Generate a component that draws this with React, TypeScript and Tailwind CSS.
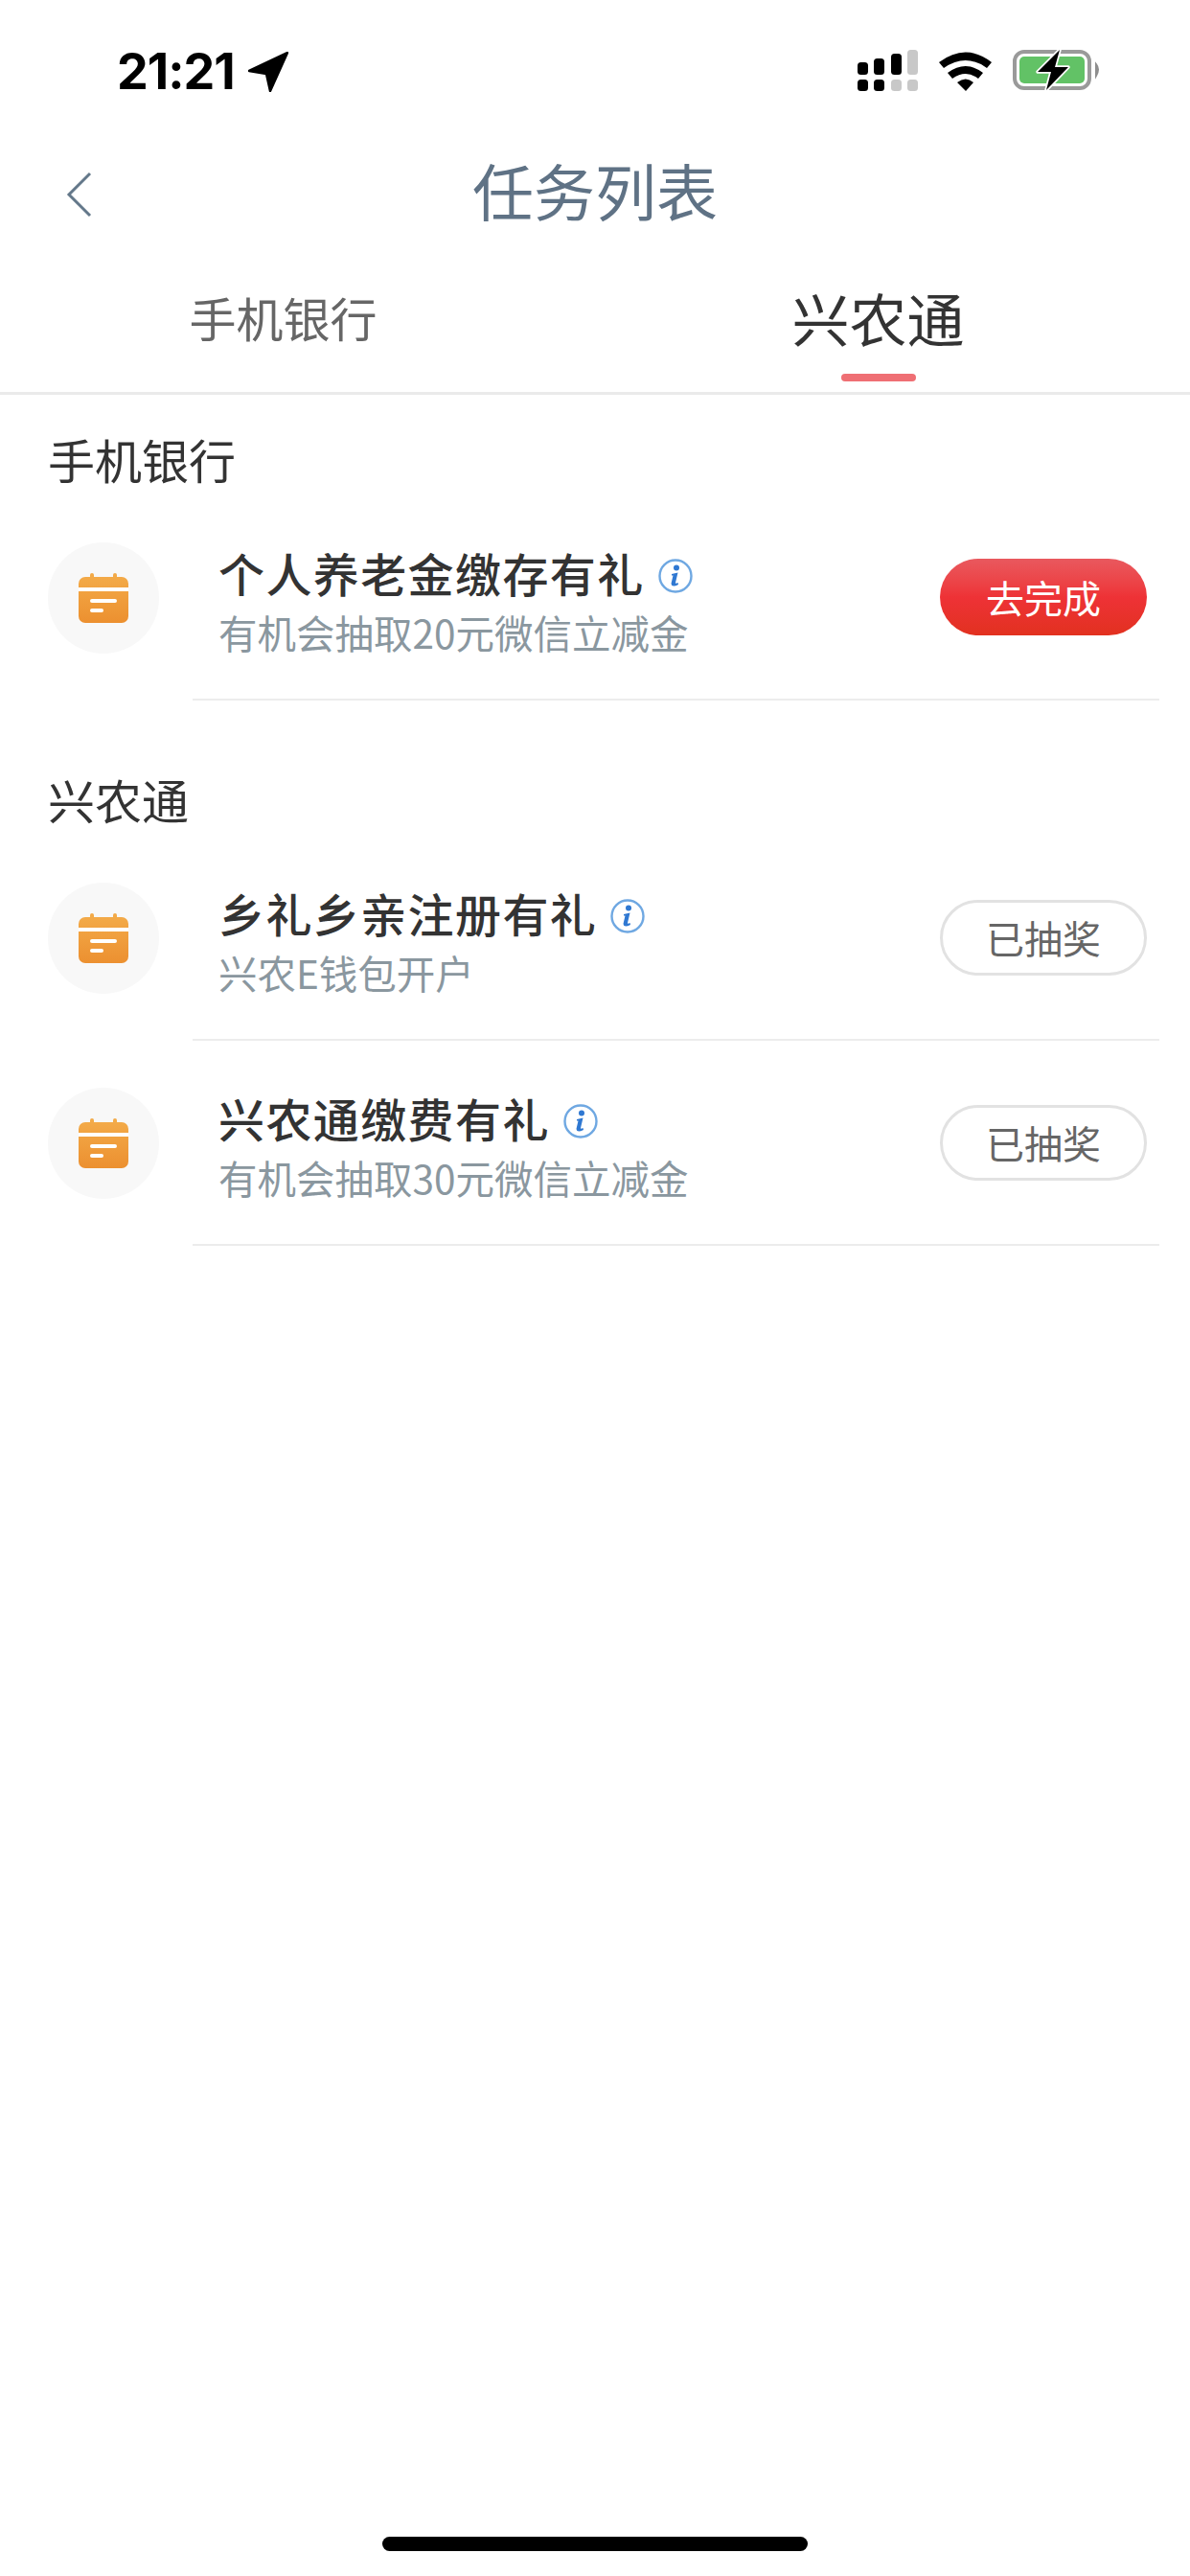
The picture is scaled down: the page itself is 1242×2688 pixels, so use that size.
import type { ReactNode } from "react"

const FONT = "font-['Noto_Sans_CJK_SC','Noto_Sans',sans-serif]"

type Tarea = { titulo: string; sub: string; hecho: boolean }

const GRUPOS: { nombre: string; tareas: Tarea[] }[] = [
  {
    nombre: "手机银行",
    tareas: [{ titulo: "个人养老金缴存有礼", sub: "有机会抽取20元微信立减金", hecho: false }],
  },
  {
    nombre: "兴农通",
    tareas: [
      { titulo: "乡礼乡亲注册有礼", sub: "兴农E钱包开户", hecho: true },
      { titulo: "兴农通缴费有礼", sub: "有机会抽取30元微信立减金", hecho: true },
    ],
  },
]

function StatusIcons() {
  return (
    <svg width="254" height="46" viewBox="0 0 254 46" fill="none">
      <rect x="0" y="15" width="11" height="13" rx="3.5" fill="#000" />
      <rect x="17" y="11" width="11" height="17" rx="3.5" fill="#000" />
      <rect x="35" y="6" width="11" height="22" rx="3.5" fill="#000" />
      <rect x="52" y="2" width="11" height="26" rx="3.5" fill="#c8c8c8" />
      <rect x="0" y="33" width="11" height="12" rx="3.5" fill="#000" />
      <rect x="17" y="33" width="11" height="12" rx="3.5" fill="#000" />
      <rect x="35" y="33" width="11" height="12" rx="3.5" fill="#c8c8c8" />
      <rect x="52" y="33" width="11" height="12" rx="3.5" fill="#c8c8c8" />
      <path d="M85 15 Q113 -6 140 15 L135 21 Q113 5 90 21 Z" fill="#000" />
      <path d="M94 26 Q113 12 131 26 L126 32 Q113 22 99 32 Z" fill="#000" />
      <path d="M104 36 Q113 29 121 36 L113 45 Z" fill="#000" />
      <rect x="164" y="4" width="78" height="38" rx="10" stroke="#9a9a9a" stroke-width="4" />
      <rect x="169" y="9" width="68" height="28" rx="5" fill="#62c266" />
      <path d="M249 17 Q253 22 249 29 Z" fill="#8e8e8e" stroke="#8e8e8e" stroke-width="2" />
      <path
        d="M211 2 L188 25 L202 25 L197 44 L220 20 L206 20 Z"
        fill="#000"
        stroke="#fff"
        stroke-width="3.5"
        stroke-linejoin="round"
        paint-order="stroke"
      />
    </svg>
  )
}

function CalendarIcon() {
  return (
    <svg width="52" height="52" viewBox="0 0 52 52">
      <defs>
        <linearGradient id="cal" x1="0" y1="0" x2="0" y2="1">
          <stop offset="0" stop-color="#f3aa48" />
          <stop offset="1" stop-color="#ec9030" />
        </linearGradient>
      </defs>
      <rect x="12" y="0" width="4" height="8" rx="2" fill="#f3aa48" />
      <rect x="36" y="0" width="4" height="8" rx="2" fill="#f3aa48" />
      <rect x="0" y="4" width="52" height="48" rx="7" fill="url(#cal)" />
      <rect x="0" y="15" width="52" height="4" fill="#fff" />
      <rect x="12" y="27" width="28" height="4" rx="2" fill="#fff" />
      <rect x="12" y="37" width="14" height="4" rx="2" fill="#fff" />
    </svg>
  )
}

function InfoIcon() {
  return (
    <svg width="36" height="36" viewBox="0 0 36 36" fill="none" className="mt-[8px]">
      <circle cx="18" cy="18" r="16.5" stroke="#6fa8e2" stroke-width="2.4" />
      <circle cx="19" cy="9.5" r="3" fill="#2f78d2" />
      <path
        d="M14 16 L20.5 14.5 L18 25 Q17.8 26.5 20.5 25 L21 27 Q14 30.5 13.5 26 L15.5 17.5 L14 17.5 Z"
        fill="#2f78d2"
      />
    </svg>
  )
}

function Boton({ hecho }: { hecho: boolean }) {
  if (hecho) {
    return (
      <div className="flex h-[79px] w-[216px] shrink-0 items-center justify-center rounded-full border-[3px] border-[#e2e2e2] text-[40px] text-[#666666]">
        已抽奖
      </div>
    )
  }
  return (
    <div className="flex h-[80px] w-[216px] shrink-0 items-center justify-center rounded-full bg-linear-to-b from-[#e9585e] via-[#ee3236] to-[#e2311f] text-[40px] text-white">
      去完成
    </div>
  )
}

function Fila({ tarea }: { tarea: Tarea }) {
  return (
    <div className="flex h-[214px] pl-[49px] pr-[32px]">
      <div className="flex h-[214px] w-[118px] shrink-0 items-center justify-center">
        <div className="flex h-[116px] w-[116px] items-center justify-center rounded-full bg-[#f8f8f8]">
          <CalendarIcon />
        </div>
      </div>
      <div className="ml-[34px] flex flex-1 items-center justify-between border-b-2 border-[#ececec] pl-[27px] pr-[13px]">
        <div className="flex flex-col pt-[5px]">
          <div className="flex items-center gap-[14px]">
            <span className="text-[48px] leading-[64px] font-medium tracking-[1.4px] text-[#333333]">
              {tarea.titulo}
            </span>
            <InfoIcon />
          </div>
          <span className="mt-[5px] text-[40.5px] leading-[52px] text-[#8a979f]">{tarea.sub}</span>
        </div>
        <Boton hecho={tarea.hecho} />
      </div>
    </div>
  )
}

function Grupo({ nombre, children }: { nombre: string; children: ReactNode }) {
  return (
    <section className="mb-[36px]">
      <h2 className="flex h-[105px] items-center pl-[50px] pt-[28px] text-[49px] font-normal text-[#333333]">
        {nombre}
      </h2>
      {children}
    </section>
  )
}

export default function App() {
  return (
    <div className={`flex h-[2688px] w-[1242px] flex-col bg-white ${FONT}`}>
      {/* barra de estado */}
      <div className="flex h-[130px] items-start justify-between pl-[122px] pr-[93px] pt-[50px]">
        <div className="flex items-center gap-[14px]">
          <span className="font-['Inter',sans-serif] text-[52px] leading-[50px] font-bold tracking-[-1px] text-black">
            21:21
          </span>
          <svg width="42" height="42" viewBox="0 0 42 42">
            <path d="M41 1 L1 20 L19 23 L23 41 Z" fill="#000" stroke="#000" stroke-width="2.5" stroke-linejoin="round" />
          </svg>
        </div>
        <StatusIcons />
      </div>

      {/* cabecera */}
      <header className="grid h-[136px] grid-cols-[1fr_auto_1fr] items-center pl-[68px]">
        <svg width="30" height="50" viewBox="0 0 30 50" fill="none" className="mt-[10px]">
          <path d="M26 3 L4 25 L26 47" stroke="#64788a" stroke-width="3" />
        </svg>
        <h1 className="ml-[-68px] pb-[2px] text-center text-[64px] font-normal text-[#5f7285]">任务列表</h1>
      </header>

      {/* pestañas */}
      <nav className="grid h-[146px] grid-cols-[591px_651px] border-b-[3px] border-[#eaeaea]">
        <div className="flex items-center justify-center pb-[13px] text-[49px] text-[#666666]">手机银行</div>
        <div className="relative flex items-center justify-center pb-[13px] text-[60px] text-[#333333]">
          兴农通
          <span className="absolute bottom-[11px] left-1/2 h-[8px] w-[78px] -translate-x-1/2 rounded-full bg-[#ef6f74]" />
        </div>
      </nav>

      {GRUPOS.map((g) => (
        <Grupo key={g.nombre} nombre={g.nombre}>
          {g.tareas.map((t) => (
            <Fila key={t.titulo} tarea={t} />
          ))}
        </Grupo>
      ))}

      <div className="mt-auto flex justify-center pb-[26px]">
        <div className="h-[15px] w-[444px] rounded-full bg-black" />
      </div>
    </div>
  )
}
